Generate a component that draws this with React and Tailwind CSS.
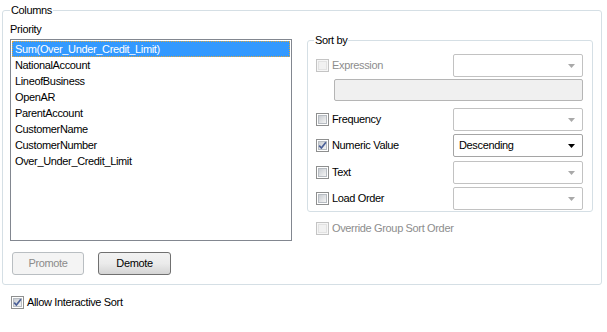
import React from 'react';
import clsx from 'clsx';

const items = [
  'Sum(Over_Under_Credit_Limit)',
  'NationalAccount',
  'LineofBusiness',
  'OpenAR',
  'ParentAccount',
  'CustomerName',
  'CustomerNumber',
  'Over_Under_Credit_Limit',
];

function Check({ checked, disabled }) {
  return (
    <span
      className={clsx(
        'relative w-[13px] h-[13px] border p-[1px] shrink-0',
        disabled ? 'border-[#c4c4c4] bg-[#f6f6f6]' : 'border-[#8e8f8f] bg-white'
      )}
    >
      <span
        className={clsx(
          'block w-[9px] h-[9px]',
          disabled
            ? 'bg-[#f1f1f1] border border-[#e2e2e2]'
            : 'bg-gradient-to-br from-[#c9cdd2] to-[#f4f4f4] border border-[#b7bcc2]'
        )}
      />
      {checked && (
        <svg className="absolute left-[1px] top-[1px]" width="9" height="9" viewBox="0 0 9 9">
          <path d="M1.2 4.6 L3.4 7 L7.9 1.3" fill="none" stroke="#4a5f97" strokeWidth="1.7" />
        </svg>
      )}
    </span>
  );
}

function Combo({ value, disabled }) {
  return (
    <div
      className={clsx(
        'w-[130px] h-[23px] rounded-[2px] border bg-white flex items-center pl-[5px] pr-[7px]',
        disabled ? 'border-[#c2c2c2]' : 'border-[#a5a5a5]'
      )}
    >
      <span className="flex-1">{value}</span>
      <svg width="7" height="4" viewBox="0 0 7 4">
        <path d="M0 0 H7 L3.5 4 Z" fill={disabled ? '#a9a9a9' : '#000'} />
      </svg>
    </div>
  );
}

function SortRow({ label, checked, disabled, value, className }) {
  return (
    <div className={clsx('flex items-center', className)}>
      <div className="w-[137px] flex items-center gap-[3px]">
        <Check checked={checked} disabled={disabled} />
        <span className={disabled ? 'text-[#8d8d8d]' : ''}>{label}</span>
      </div>
      <Combo value={value} disabled={disabled || !value} />
    </div>
  );
}

export default function App() {
  return (
    <div className="w-[607px] h-[332px] bg-white text-black text-[11px] leading-[13px] tracking-[-0.35px] font-['Liberation_Sans',Arial,sans-serif] overflow-hidden">
      <fieldset className="ml-[2px] mt-[4px] w-[600px] h-[281px] border border-[#d5dfe5] rounded-[3px] px-[7px]">
        <legend className="px-[1px] leading-[13px]">Columns</legend>
        <div className="flex">
          {/* left column: priority list */}
          <div className="w-[282px]">
            <div className="mt-[6px]">Priority</div>
            <div className="mt-[3px] h-[202px] border border-[#828790] p-[1px]">
              {items.map((it, i) => (
                <div
                  key={it}
                  className={clsx(
                    'h-[16px] pl-[2px] flex items-center border',
                    i === 0
                      ? 'bg-[#3399ff] text-white border-dotted border-[#d9a440]'
                      : 'border-transparent'
                  )}
                >
                  {it}
                </div>
              ))}
            </div>
            <div className="mt-[11px] flex gap-[14px] pl-[2px]">
              <button className="w-[72px] h-[23px] rounded-[3px] border border-[#b9bec2] bg-[#f4f4f4] text-[#8b8b8b]">
                Promote
              </button>
              <button className="w-[73px] h-[23px] rounded-[3px] border border-[#707070] bg-gradient-to-b from-[#f2f2f2] via-[#ebebeb] to-[#d4d4d4]">
                Demote
              </button>
            </div>
          </div>

          {/* right column: sort options */}
          <div className="ml-[15px] w-[286px]">
            <fieldset className="mt-[17px] border border-[#d5dfe5] rounded-[3px] pl-[8px] pr-[9px] pb-[1px]">
              <legend className="-ml-[2px] px-[1px] leading-[13px]">Sort by</legend>
              <SortRow className="mt-[7px]" label="Expression" disabled />
              <div className="ml-[18px] mt-[2px] h-[22px] rounded-[2px] border border-[#b5b5b5] bg-[#f0f0f0]" />
              <SortRow className="mt-[7px]" label="Frequency" />
              <SortRow className="mt-[3px]" label="Numeric Value" checked value="Descending" />
              <SortRow className="mt-[4px]" label="Text" />
              <SortRow className="mt-[3px]" label="Load Order" />
            </fieldset>
            <div className="mt-[10px] ml-[9px] flex items-center gap-[3px]">
              <Check disabled />
              <span className="text-[#8d8d8d]">Override Group Sort Order</span>
            </div>
          </div>
        </div>
      </fieldset>

      <div className="mt-[11px] ml-[11px] flex items-center gap-[3px]">
        <Check checked />
        <span>Allow Interactive Sort</span>
      </div>
    </div>
  );
}
